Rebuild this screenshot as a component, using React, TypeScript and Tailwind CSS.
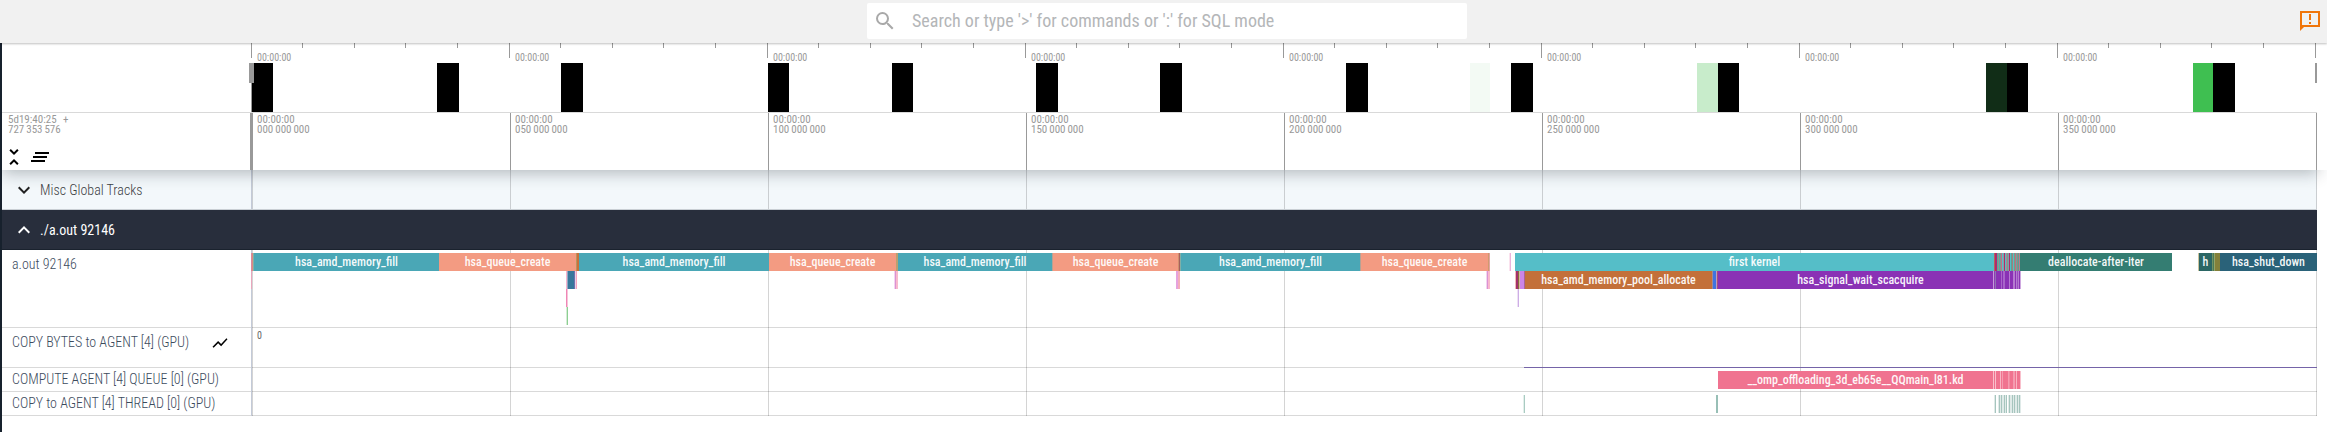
import type { ReactNode } from "react";
import {
  MdClearAll,
  MdExpandLess,
  MdExpandMore,
  MdSearch,
  MdShowChart,
  MdUnfoldLess,
} from "react-icons/md";

/** Horizontal position of the first pixel of every track canvas. */
const ORIGIN = 251;

type Slice = [start: number, end: number, color: string, label?: string];

const TEAL = "#4aa7b6";
const SALMON = "#f39b82";
const PURPLE = "#8a32b5";
const PINK = "#f07390";

/** Turns a list of one pixel wide colours into slices. */
const stripes = (start: number, colors: string[]): Slice[] =>
  colors.map((c, i) => [start + i, start + i + 1, c]);

const depth0: Slice[] = [
  [251, 252, "#d9899f"],
  [252, 253, "#d98d80"],
  [253, 254, "#7fb0a8"],
  [254, 439, TEAL, "hsa_amd_memory_fill"],
  [439, 576, SALMON, "hsa_queue_create"],
  [576, 577, "#b8935f"],
  [577, 579, "#c8703a"],
  [579, 769, TEAL, "hsa_amd_memory_fill"],
  [769, 896, SALMON, "hsa_queue_create"],
  [896, 898, "#bba070"],
  [898, 1052, TEAL, "hsa_amd_memory_fill"],
  [1052, 1053, "#b5a295"],
  [1053, 1178, SALMON, "hsa_queue_create"],
  [1178, 1179, "#cf8f6e"],
  [1179, 1180, "#a85f5c"],
  [1180, 1181, "#7fb0a8"],
  [1181, 1360, TEAL, "hsa_amd_memory_fill"],
  [1360, 1361, "#b5a295"],
  [1361, 1488, SALMON, "hsa_queue_create"],
  [1488, 1489, "#cf9a70"],
  [1489, 1490, "#e3a3a0"],
  [1509, 1510, "#fbe2ee"],
  [1510, 1511, "#ebb4dc"],
  [1515, 1994, "#55bec8", "first kernel"],
  ...stripes(1994, [
    "#b8605a", "#b02a6c", "#b02a6c", "#55a8a0", "#a08a90", "#4fb0a0", "#7d9a90",
    "#c0708a", "#55bec8", "#8aa0a0", "#b02a6c", "#55bec8", "#b88090", "#70a090",
    "#8a9aa8", "#b02a6c", "#55bec8", "#60a090", "#a08080", "#55bec8", "#7d9a80",
    "#b8708a", "#60b0a0", "#a08080", "#5aa098", "#b88090",
  ]),
  [2020, 2172, "#347d72", "deallocate-after-iter"],
  [2198, 2199, "#cbc39d"],
  [2199, 2212, "#2b6664", "h"],
  [2212, 2213, "#6f9163"],
  [2213, 2214, "#4a7a58"],
  [2214, 2215, "#94a468"],
  [2215, 2220, "#83803a"],
  [2220, 2317, "#2a6279", "hsa_shut_down"],
];

const depth1: Slice[] = [
  [251, 252, "#e9a6bd"],
  [566, 567, "#f5b3cf"],
  [567, 568, "#92a8c0"],
  [568, 574, "#38779b"],
  [574, 575, "#6f6fae"],
  [575, 576, "#e4d3e6"],
  [576, 577, "#f6a3bf"],
  [894, 895, "#f2d4f0"],
  [895, 896, "#dc92d2"],
  [896, 898, "#f8b9cd"],
  [1176, 1178, "#e5a2de"],
  [1178, 1180, "#f4aeb9"],
  [1486, 1487, "#f2d4f0"],
  [1487, 1488, "#dc92d2"],
  [1488, 1490, "#f8b9cd"],
  [1515, 1516, "#f0b9b5"],
  [1516, 1518, "#a3306b"],
  [1518, 1519, "#846f3c"],
  [1519, 1520, "#d9b59a"],
  [1520, 1524, "#cc85e6"],
  [1524, 1525, "#a8639b"],
  [1525, 1712, "#c3703a", "hsa_amd_memory_pool_allocate"],
  [1712, 1713, "#9a8a98"],
  [1713, 1716, "#4074e0"],
  [1716, 1717, "#c39bbb"],
  [1717, 1718, "#a0507c"],
  [1718, 1728, PURPLE],
  [1728, 1993, PURPLE, "hsa_signal_wait_scacquire"],
  ...stripes(1993, [
    "#c59ada", "#8f3cb5", "#8f74b2", PURPLE, PURPLE, PURPLE, PURPLE, PURPLE,
    "#a865c9", PURPLE, "#a865c9", "#a865c9", PURPLE, PURPLE, PURPLE, PURPLE,
    "#b57ad0", PURPLE, PURPLE, PURPLE, "#b57ad0", "#b57ad0", PURPLE, "#b57ad0",
    "#9a4fc0", "#b57ad0", PURPLE, "#cfa9e0",
  ]),
];

const depth2: Slice[] = [
  [566, 567, "#ef86b5"],
  [567, 568, "#f7c3da"],
  [1517, 1518, "#eee0f5"],
  [1518, 1519, "#cdaee6"],
];

const depth3: Slice[] = [
  [566, 567, "#d5ecd5"],
  [567, 568, "#8ccf92"],
];

const computeQueue: Slice[] = [
  [1718, 1993, PINK, "__omp_offloading_3d_eb65e__QQmain_l81.kd"],
  ...stripes(1993, [
    "#f9c0cc", PINK, "#f9c0cc", PINK, PINK, PINK, PINK, "#f9b4c3", PINK,
    "#f59bb0", PINK, PINK, PINK, PINK, PINK, "#f59bb0", "#f28aa2", PINK, PINK,
    PINK, "#f59bb0", "#f59bb0", PINK, "#f9b4c3", PINK, PINK, PINK, "#f9c0cc",
  ]),
];

const L = "#dfeae8";
const D = "#a6c5be";
const copyThread: Slice[] = [
  [1523, 1524, "#e3efeb"],
  [1524, 1525, "#a9cbc2"],
  [1716, 1718, "#98bfb6"],
  ...stripes(1994, [
    L, D, "#fff", "#fff", L, D, L, D, L, L, D, L, D, "#fff", L, D, L, L, D, L,
    D, L, L, D, L, D, L,
  ]),
];

const minimapLoad: Slice[] = [
  [252, 273, "#000"],
  [437, 459, "#000"],
  [561, 583, "#000"],
  [768, 789, "#000"],
  [892, 913, "#000"],
  [1036, 1058, "#000"],
  [1160, 1182, "#000"],
  [1346, 1368, "#000"],
  [1470, 1490, "#f3faf4"],
  [1511, 1533, "#000"],
  [1697, 1718, "#c8eccb"],
  [1718, 1739, "#000"],
  [1986, 2007, "#112d17"],
  [2007, 2028, "#000"],
  [2193, 2213, "#3fbf51"],
  [2213, 2235, "#000"],
];

const majorTicks = ["000", "050", "100", "150", "200", "250", "300", "350"];
const minimapTicks = Array.from({ length: 41 }, (_, i) => ({
  x: Math.floor(ORIGIN + 51.6 * i + 0.001),
  major: i % 5 === 0,
}));

function SliceRow({ slices, className }: { slices: Slice[]; className: string }) {
  return (
    <div className={`flex ${className}`}>
      {slices.map(([start, end, color, label], i) => {
        const previousEnd = i === 0 ? ORIGIN : slices[i - 1][1];
        return (
          <div
            key={i}
            className="flex h-full shrink-0 items-center justify-center text-[12px] font-medium leading-[18px] text-[#fffffff0]"
            style={{ width: end - start, marginLeft: start - previousEnd, backgroundColor: color }}
          >
            {label}
          </div>
        );
      })}
    </div>
  );
}

function Track({
  title,
  className,
  titleClass,
  icon,
  children,
}: {
  title: string;
  className: string;
  titleClass: string;
  icon?: ReactNode;
  children?: ReactNode;
}) {
  return (
    <div className={`flex w-[2315px] border-b border-[#d9d9d9] ${className}`}>
      <div
        className={`flex w-[249px] shrink-0 justify-between pl-[10px] pr-[22px] text-[14px] font-light leading-[18px] text-[#3c4b5d] ${titleClass}`}
      >
        <span>{title}</span>
        {icon}
      </div>
      <div className="-mb-px w-[2066px] border-l border-[#c3cad8] bg-[linear-gradient(to_right,#0000002b_1px,transparent_1px)] bg-[length:258px_100%]">
        <div className="-ml-px">{children}</div>
      </div>
    </div>
  );
}

function TopBar() {
  return (
    <header className="relative z-20 flex h-[43px] bg-[#f1f1f1] pr-[5px] pt-[3px] shadow-[0_1px_2px_#00000040]">
      <div className="ml-[867px] flex h-9 w-[600px] items-center rounded-[2px] bg-white pl-[6px]">
        <MdSearch className="size-6 text-[#a9a9a9]" />
        <span className="ml-[15px] text-[18px] leading-6 text-[#b4b6b8]">
          Search or type '&gt;' for commands or ':' for SQL mode
        </span>
      </div>
      <svg viewBox="0 0 24 24" className="ml-auto mt-[6px] size-6" fill="#f0750a">
        <path d="M2 2v20l4-4h16V2H2zm18 14H4V4h16v12zM11 5h2v6h-2zM11 13h2v2h-2z" />
      </svg>
    </header>
  );
}

function Minimap() {
  return (
    <div className="h-[70px] border-b border-[#d9d9d9]">
      <div className="flex h-[15px] pl-[249px]">
        {minimapTicks.map(({ x, major }, i) => (
          <div
            key={x}
            className={major ? "h-[15px] w-px shrink-0 bg-[#999]" : "h-[5px] w-px shrink-0 bg-[#999]"}
            style={{ marginLeft: i === 0 ? 0 : x - minimapTicks[i - 1].x - 1 }}
          />
        ))}
      </div>
      <div className="-mt-[6px] flex h-[11px] pl-[255px] text-[10px] leading-[11px] text-[#999]">
        {majorTicks.map((t) => (
          <span key={t} className="w-[258px] shrink-0">
            00:00:00
          </span>
        ))}
      </div>
      <div className="relative h-[49px] pl-[249px]">
        <SliceRow slices={minimapLoad} className="h-[49px]" />
        <div className="absolute left-[249px] top-0 h-[49px] w-px bg-[#999]" />
        <div className="absolute left-[247px] top-0 h-5 w-[5px] bg-[#999]" />
        <div className="absolute right-0 top-0 h-5 w-[2px] bg-[#999]" />
      </div>
    </div>
  );
}

function TimeAxis() {
  return (
    <div className="flex h-[57px] text-[11px] leading-[10px] text-[#999]">
      <div className="flex w-[248px] shrink-0 flex-col pl-[6px] pt-[2px]">
        <span className="whitespace-pre [word-spacing:-0.4px]">5d19:40:25{"   "}+</span>
        <span className="[word-spacing:-0.6px]">727 353 576</span>
        <div className="-ml-[6px] mt-[10px] flex gap-[2px] text-black">
          <MdUnfoldLess className="size-6" />
          <MdClearAll className="size-6" />
        </div>
      </div>
      <div className="w-[2px] shrink-0 bg-[#999]" />
      <div className="flex">
        {majorTicks.map((t) => (
          <div key={t} className="flex w-[258px] shrink-0 flex-col border-l border-[#999] pl-1 pt-[2px]">
            <span>00:00:00</span>
            <span className="[word-spacing:-0.6px]">{t} 000 000</span>
          </div>
        ))}
        <div className="w-px bg-[#999]" />
      </div>
    </div>
  );
}

export default function App() {
  return (
    <div className="relative h-[432px] w-[2327px] overflow-hidden bg-white font-['Roboto_Condensed',Roboto,sans-serif]">
      <TopBar />
      <div className="h-[389px] overflow-hidden border-l-2 border-[#17212d]">
        <div className="relative z-10 flex">
          <div className="w-[2315px] shrink-0 bg-white shadow-[1px_3px_15px_rgba(23,32,44,0.3)]">
            <Minimap />
            <TimeAxis />
          </div>
          <div className="relative w-[10px] shrink-0 bg-white" />
        </div>

        <div className="flex h-10 w-[2315px] border-b border-[#c9cfd4] bg-[#f3f8fb]">
          <div className="flex w-[249px] items-center pl-[10px] pt-px text-[14px] font-light text-[#3c4043]">
            <MdExpandMore className="mr-1 size-6 text-[#222]" />
            Misc Global Tracks
          </div>
          <div className="w-[2066px] border-l border-[#c3cad8] bg-[linear-gradient(to_right,#0000002b_1px,transparent_1px)] bg-[length:258px_100%]" />
        </div>

        <div className="flex h-10 w-[2315px] items-center border-b border-[#1a222e] bg-[#282e3c] pl-[10px] pt-px text-[14px] text-white">
          <MdExpandLess className="mr-1 size-6" />
          ./a.out 92146
        </div>

        <Track title="a.out 92146" className="h-[78px]" titleClass="pt-[5px]">
          <div className="pt-[3px]">
            <SliceRow slices={depth0} className="h-[18px]" />
            <SliceRow slices={depth1} className="h-[18px]" />
            <SliceRow slices={depth2} className="h-[18px]" />
            <SliceRow slices={depth3} className="h-[18px]" />
          </div>
        </Track>
        <Track
          title="COPY BYTES to AGENT [4] (GPU)"
          className="h-10"
          titleClass="pt-[5px]"
          icon={<MdShowChart className="mt-px size-[18px] text-black" />}
        >
          <div className="flex h-10 flex-col justify-between">
            <span className="pl-[6px] pt-[2px] text-[10px] leading-[11px] text-[#666]">0</span>
            <div className="ml-[1273px] h-px bg-[#7564a8]" />
          </div>
        </Track>
        <Track title="COMPUTE AGENT [4] QUEUE [0] (GPU)" className="h-6" titleClass="pt-[2px]">
          <SliceRow slices={computeQueue} className="h-[21px] pt-[3px]" />
        </Track>
        <Track title="COPY to AGENT [4] THREAD [0] (GPU)" className="h-6" titleClass="pt-[2px]">
          <SliceRow slices={copyThread} className="h-[21px] pt-[3px]" />
        </Track>
      </div>
    </div>
  );
}
